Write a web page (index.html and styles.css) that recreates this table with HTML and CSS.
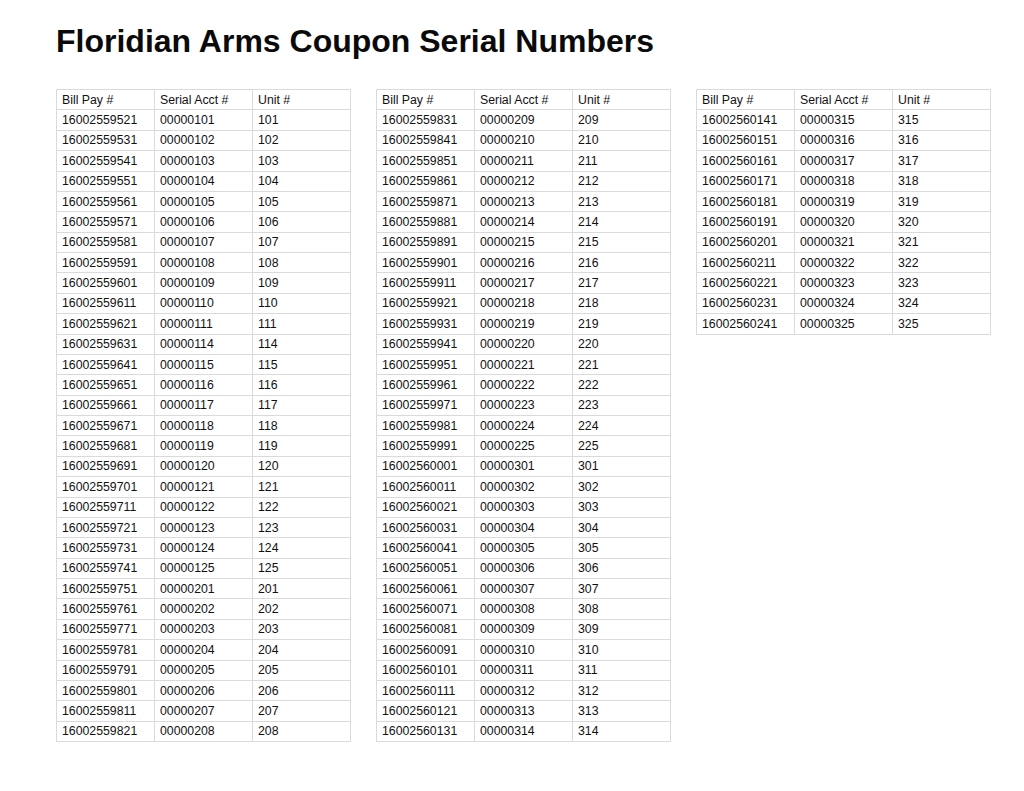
FILE: index.html
```html
<!DOCTYPE html>
<html>
<head>
<meta charset="utf-8">
<title>Floridian Arms Coupon Serial Numbers</title>
<link rel="stylesheet" href="styles.css">
</head>
<body>
<div class="page">
  <h1 class="title">Floridian Arms Coupon Serial Numbers</h1>
  <div class="tables">
    <table class="sheet">
      <tr><td>Bill Pay #</td><td>Serial Acct #</td><td>Unit #</td></tr>
      <tr><td>16002559521</td><td>00000101</td><td>101</td></tr>
      <tr><td>16002559531</td><td>00000102</td><td>102</td></tr>
      <tr><td>16002559541</td><td>00000103</td><td>103</td></tr>
      <tr><td>16002559551</td><td>00000104</td><td>104</td></tr>
      <tr><td>16002559561</td><td>00000105</td><td>105</td></tr>
      <tr><td>16002559571</td><td>00000106</td><td>106</td></tr>
      <tr><td>16002559581</td><td>00000107</td><td>107</td></tr>
      <tr><td>16002559591</td><td>00000108</td><td>108</td></tr>
      <tr><td>16002559601</td><td>00000109</td><td>109</td></tr>
      <tr><td>16002559611</td><td>00000110</td><td>110</td></tr>
      <tr><td>16002559621</td><td>00000111</td><td>111</td></tr>
      <tr><td>16002559631</td><td>00000114</td><td>114</td></tr>
      <tr><td>16002559641</td><td>00000115</td><td>115</td></tr>
      <tr><td>16002559651</td><td>00000116</td><td>116</td></tr>
      <tr><td>16002559661</td><td>00000117</td><td>117</td></tr>
      <tr><td>16002559671</td><td>00000118</td><td>118</td></tr>
      <tr><td>16002559681</td><td>00000119</td><td>119</td></tr>
      <tr><td>16002559691</td><td>00000120</td><td>120</td></tr>
      <tr><td>16002559701</td><td>00000121</td><td>121</td></tr>
      <tr><td>16002559711</td><td>00000122</td><td>122</td></tr>
      <tr><td>16002559721</td><td>00000123</td><td>123</td></tr>
      <tr><td>16002559731</td><td>00000124</td><td>124</td></tr>
      <tr><td>16002559741</td><td>00000125</td><td>125</td></tr>
      <tr><td>16002559751</td><td>00000201</td><td>201</td></tr>
      <tr><td>16002559761</td><td>00000202</td><td>202</td></tr>
      <tr><td>16002559771</td><td>00000203</td><td>203</td></tr>
      <tr><td>16002559781</td><td>00000204</td><td>204</td></tr>
      <tr><td>16002559791</td><td>00000205</td><td>205</td></tr>
      <tr><td>16002559801</td><td>00000206</td><td>206</td></tr>
      <tr><td>16002559811</td><td>00000207</td><td>207</td></tr>
      <tr><td>16002559821</td><td>00000208</td><td>208</td></tr>
    </table>
    <table class="sheet">
      <tr><td>Bill Pay #</td><td>Serial Acct #</td><td>Unit #</td></tr>
      <tr><td>16002559831</td><td>00000209</td><td>209</td></tr>
      <tr><td>16002559841</td><td>00000210</td><td>210</td></tr>
      <tr><td>16002559851</td><td>00000211</td><td>211</td></tr>
      <tr><td>16002559861</td><td>00000212</td><td>212</td></tr>
      <tr><td>16002559871</td><td>00000213</td><td>213</td></tr>
      <tr><td>16002559881</td><td>00000214</td><td>214</td></tr>
      <tr><td>16002559891</td><td>00000215</td><td>215</td></tr>
      <tr><td>16002559901</td><td>00000216</td><td>216</td></tr>
      <tr><td>16002559911</td><td>00000217</td><td>217</td></tr>
      <tr><td>16002559921</td><td>00000218</td><td>218</td></tr>
      <tr><td>16002559931</td><td>00000219</td><td>219</td></tr>
      <tr><td>16002559941</td><td>00000220</td><td>220</td></tr>
      <tr><td>16002559951</td><td>00000221</td><td>221</td></tr>
      <tr><td>16002559961</td><td>00000222</td><td>222</td></tr>
      <tr><td>16002559971</td><td>00000223</td><td>223</td></tr>
      <tr><td>16002559981</td><td>00000224</td><td>224</td></tr>
      <tr><td>16002559991</td><td>00000225</td><td>225</td></tr>
      <tr><td>16002560001</td><td>00000301</td><td>301</td></tr>
      <tr><td>16002560011</td><td>00000302</td><td>302</td></tr>
      <tr><td>16002560021</td><td>00000303</td><td>303</td></tr>
      <tr><td>16002560031</td><td>00000304</td><td>304</td></tr>
      <tr><td>16002560041</td><td>00000305</td><td>305</td></tr>
      <tr><td>16002560051</td><td>00000306</td><td>306</td></tr>
      <tr><td>16002560061</td><td>00000307</td><td>307</td></tr>
      <tr><td>16002560071</td><td>00000308</td><td>308</td></tr>
      <tr><td>16002560081</td><td>00000309</td><td>309</td></tr>
      <tr><td>16002560091</td><td>00000310</td><td>310</td></tr>
      <tr><td>16002560101</td><td>00000311</td><td>311</td></tr>
      <tr><td>16002560111</td><td>00000312</td><td>312</td></tr>
      <tr><td>16002560121</td><td>00000313</td><td>313</td></tr>
      <tr><td>16002560131</td><td>00000314</td><td>314</td></tr>
    </table>
    <table class="sheet">
      <tr><td>Bill Pay #</td><td>Serial Acct #</td><td>Unit #</td></tr>
      <tr><td>16002560141</td><td>00000315</td><td>315</td></tr>
      <tr><td>16002560151</td><td>00000316</td><td>316</td></tr>
      <tr><td>16002560161</td><td>00000317</td><td>317</td></tr>
      <tr><td>16002560171</td><td>00000318</td><td>318</td></tr>
      <tr><td>16002560181</td><td>00000319</td><td>319</td></tr>
      <tr><td>16002560191</td><td>00000320</td><td>320</td></tr>
      <tr><td>16002560201</td><td>00000321</td><td>321</td></tr>
      <tr><td>16002560211</td><td>00000322</td><td>322</td></tr>
      <tr><td>16002560221</td><td>00000323</td><td>323</td></tr>
      <tr><td>16002560231</td><td>00000324</td><td>324</td></tr>
      <tr><td>16002560241</td><td>00000325</td><td>325</td></tr>
    </table>
  </div>
</div>
</body>
</html>
```
FILE: styles.css
```css
html, body {
  margin: 0;
  padding: 0;
  background: #ffffff;
}

.page {
  padding: 23px 0 0 56px;
  font-family: "Liberation Sans", Arial, sans-serif;
  color: #111111;
}

.title {
  margin: 0;
  font-size: 32px;
  line-height: 36px;
  font-weight: bold;
  color: #0a0a0a;
}

.tables {
  display: flex;
  align-items: flex-start;
  gap: 25px;
  margin-top: 30px;
}

.sheet {
  border-collapse: collapse;
  table-layout: fixed;
  width: 295px;
  font-size: 12.3px;
}

.sheet td {
  border: 1px solid #dadada;
  height: 20.375px;
  padding: 0 5px;
  box-sizing: border-box;
  line-height: 14px;
  vertical-align: middle;
  white-space: nowrap;
  width: 33.33%;
}
```
